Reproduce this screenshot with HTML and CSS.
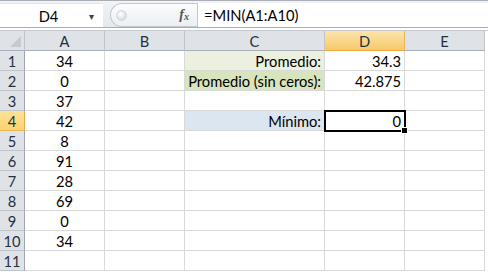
FILE: index.html
```html
<!DOCTYPE html>
<html lang="es">
<head>
  <meta charset="UTF-8">
  <title>MIN - Hoja1</title>
  <link rel="stylesheet" href="styles.css">
</head>
<body>

  <div class="formula-bar">
    <div class="name-box">
      <span class="name">D4</span>
      <span class="drop">&#9662;</span>
    </div>
    <div class="fx-area">
      <span class="grip"></span>
      <span class="fx">f<sub>x</sub></span>
    </div>
    <div class="formula">=MIN(A1:A10)</div>
  </div>

  <div class="sheet">
    <div class="hdr corner"></div>
    <div class="hdr">A</div>
    <div class="hdr">B</div>
    <div class="hdr">C</div>
    <div class="hdr sel">D</div>
    <div class="hdr">E</div>

    <div class="rh">1</div>
    <div class="cell mid">34</div>
    <div class="cell"></div>
    <div class="cell right green1">Promedio:</div>
    <div class="cell right">34.3</div>
    <div class="cell"></div>

    <div class="rh">2</div>
    <div class="cell mid">0</div>
    <div class="cell"></div>
    <div class="cell right green2">Promedio (sin ceros):</div>
    <div class="cell right">42.875</div>
    <div class="cell"></div>

    <div class="rh">3</div>
    <div class="cell mid">37</div>
    <div class="cell"></div>
    <div class="cell"></div>
    <div class="cell"></div>
    <div class="cell"></div>

    <div class="rh sel">4</div>
    <div class="cell mid">42</div>
    <div class="cell"></div>
    <div class="cell right blue">Mínimo:</div>
    <div class="cell right active">0<span class="handle"></span></div>
    <div class="cell"></div>

    <div class="rh">5</div>
    <div class="cell mid">8</div>
    <div class="cell"></div>
    <div class="cell"></div>
    <div class="cell"></div>
    <div class="cell"></div>

    <div class="rh">6</div>
    <div class="cell mid">91</div>
    <div class="cell"></div>
    <div class="cell"></div>
    <div class="cell"></div>
    <div class="cell"></div>

    <div class="rh">7</div>
    <div class="cell mid">28</div>
    <div class="cell"></div>
    <div class="cell"></div>
    <div class="cell"></div>
    <div class="cell"></div>

    <div class="rh">8</div>
    <div class="cell mid">69</div>
    <div class="cell"></div>
    <div class="cell"></div>
    <div class="cell"></div>
    <div class="cell"></div>

    <div class="rh">9</div>
    <div class="cell mid">0</div>
    <div class="cell"></div>
    <div class="cell"></div>
    <div class="cell"></div>
    <div class="cell"></div>

    <div class="rh">10</div>
    <div class="cell mid">34</div>
    <div class="cell"></div>
    <div class="cell"></div>
    <div class="cell"></div>
    <div class="cell"></div>

    <div class="rh">11</div>
    <div class="cell"></div>
    <div class="cell"></div>
    <div class="cell"></div>
    <div class="cell"></div>
    <div class="cell"></div>
  </div>

</body>
</html>
```

FILE: styles.css
```css
body {
  margin: 0;
  width: 488px;
  height: 272px;
  overflow: hidden;
  background-color: #fff;
  font-family: Lato, "Open Sans", sans-serif;
  font-size: 14.7px;
  color: #000;
}
.formula-bar {
  display: flex;
  height: 24px;
  border-top: 1px solid #a9aeb5;
  padding-top: 2px;
  border-bottom: 1px solid #a9aeb5;
  background: linear-gradient(#f1f3f6, #e4e8ed);
}
.name-box {
  width: 103px;
  box-sizing: border-box;
  display: flex;
  align-items: center;
  background-color: #fff;
  border-top: 1px solid #e1e4e8;
}
.name {
  flex: 1;
  text-align: center;
  padding-left: 8px;
}
.drop {
  width: 14px;
  font-size: 10px;
  color: #444;
}
.fx-area {
  display: flex;
  align-items: center;
  width: 87px;
  margin-left: 7px;
  border: 1px solid #c3c8cf;
  border-right: none;
  border-radius: 12px 0 0 12px;
  background: linear-gradient(#fbfcfd, #eceff3);
  box-sizing: border-box;
}
.grip {
  width: 9px;
  height: 9px;
  margin-left: 5px;
  border-radius: 50%;
  background: radial-gradient(circle at 40% 35%, #fff, #c9cdd3);
  border: 1px solid #d2d6db;
}
.fx {
  margin-left: auto;
  margin-right: 8px;
  font-family: "Liberation Serif", serif;
  font-style: italic;
  font-weight: bold;
  font-size: 14px;
  color: #555;
}
.fx sub {
  font-size: 10px;
  vertical-align: -1px;
}
.formula {
  flex: 1;
  display: flex;
  align-items: center;
  padding-left: 6px;
  background-color: #fff;
  border-left: 1px solid #c3c8cf;
}
.sheet {
  display: grid;
  grid-template-columns: 25px 80px 80px 140px 80px 80px;
  grid-auto-rows: 20px;
  margin-top: 2px;
  border-top: 1px solid #c5cad1;
}
.hdr, .rh {
  display: flex;
  align-items: center;
  justify-content: center;
  background-color: #dfe3e8;
  color: #27313d;
  border-right: 1px solid #c0c5cc;
  border-bottom: 1px solid #a9b0b8;
  box-sizing: border-box;
}
.rh {
  border-bottom: 1px solid #c0c5cc;
  border-right: 1px solid #9ea5ae;
}
.corner {
  position: relative;
}
.corner::after {
  content: "";
  position: absolute;
  right: 3px;
  bottom: 3px;
  border-style: solid;
  border-width: 0 0 11px 11px;
  border-color: transparent transparent #c5cad0 transparent;
}
.hdr.sel {
  background: linear-gradient(#fbe5ac, #f6c96b);
  border-bottom: 1px solid #f2a83c;
  border-right: 1px solid #f0b45a;
}
.rh.sel {
  background: linear-gradient(#fce39a, #f9d36e);
  border-right: 1px solid #f2a83c;
  border-bottom: 1px solid #f0b45a;
}
.cell {
  display: flex;
  align-items: center;
  padding: 0 3px;
  border-right: 1px solid #d9d9d9;
  border-bottom: 1px solid #d9d9d9;
  box-sizing: border-box;
  white-space: nowrap;
}
.mid {
  justify-content: center;
}
.right {
  justify-content: flex-end;
}
.green1 {
  background-color: #ebf1de;
}
.green2 {
  background-color: #d8e4bc;
}
.blue {
  background-color: #dce6f1;
}
.active {
  position: relative;
  outline: 2px solid #000;
  outline-offset: -1px;
  z-index: 1;
}
.handle {
  position: absolute;
  right: -4px;
  bottom: -4px;
  width: 5px;
  height: 5px;
  background-color: #000;
  border: 1px solid #fff;
}
```
